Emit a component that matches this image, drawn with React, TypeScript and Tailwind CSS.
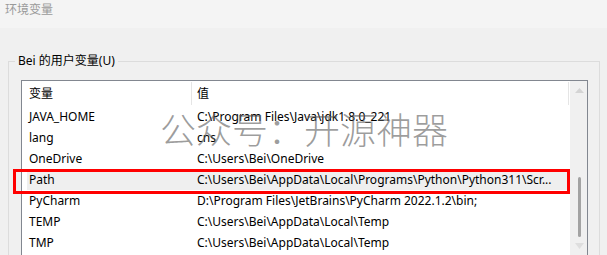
const rows = [
  { name: "JAVA_HOME", value: String.raw`C:\Program Files\Java\jdk1.8.0_221` },
  { name: "lang", value: "cns" },
  { name: "OneDrive", value: String.raw`C:\Users\Bei\OneDrive` },
  { name: "Path", value: String.raw`C:\Users\Bei\AppData\Local\Programs\Python\Python311\Scr...`, selected: true },
  { name: "PyCharm", value: String.raw`D:\Program Files\JetBrains\PyCharm 2022.1.2\bin;` },
  { name: "TEMP", value: String.raw`C:\Users\Bei\AppData\Local\Temp` },
  { name: "TMP", value: String.raw`C:\Users\Bei\AppData\Local\Temp` },
];

function ScrollBar() {
  return (
    <div className="w-[17px] bg-[#f0f0f0] flex flex-col items-center pt-[7px]">
      <svg width="9" height="5" viewBox="0 0 9 5" className="ml-px">
        <path d="M0 5 L4.5 0 L9 5 Z" fill="#d4d4d4" />
      </svg>
      <div className="mt-[84px] h-[60px] w-[3px] rounded-full bg-[#a3a3a3] ml-px" />
      <svg width="9" height="6" viewBox="0 0 9 6" className="mt-[6px] ml-px">
        <path d="M0 0 L9 0 L4.5 6 Z" fill="#dedede" />
      </svg>
    </div>
  );
}

export default function App() {
  return (
    <div className="relative w-[607px] h-[255px] overflow-hidden bg-[#f0f0f0] text-[12px] text-black font-['Noto_Sans','Noto_Sans_CJK_SC',sans-serif]">
      <div className="h-[28px] bg-[#f4f4f4] pl-[5px] pt-[3px] leading-[14px] text-[#9a9a9a]">环境变量</div>

      <fieldset className="ml-[8px] mt-[25px] w-[592px] border border-[#dcdcdc] p-0">
        <legend className="ml-[6px] px-[3px] leading-[16px]">Bei 的用户变量(U)</legend>
        <div className="pl-[12px] mt-[11px] pb-[10px]">
          <div className="flex w-[567px] h-[200px] border border-[#828790] bg-white">
            <div className="w-[548px]">
              {/* header */}
              <div className="flex h-[25px] items-center">
                <div className="w-[169px] pl-[7px]">变量</div>
                <div className="w-px h-[23px] self-start mt-px bg-[#e5e5e5]" />
                <div className="flex-1 pl-[5px]">值</div>
                <div className="w-px h-[23px] self-start mt-px bg-[#e5e5e5]" />
                <div className="w-px" />
              </div>
              {rows.map((r) => (
                <div
                  key={r.name}
                  className={`flex h-[21px] items-center ml-[5px] whitespace-nowrap overflow-hidden ${r.selected ? "bg-[#efefef]" : ""}`}
                >
                  <div className="w-[164px] pl-[2px]">{r.name}</div>
                  <div className="pl-[6px]">{r.value}</div>
                </div>
              ))}
            </div>
            <ScrollBar />
          </div>
        </div>
      </fieldset>

      {/* red annotation box */}
      <div className="absolute left-[13px] top-[169px] w-[557px] h-[25px] border-[3px] border-[#ff0000] pointer-events-none" />

      {/* watermark */}
      <div className="absolute left-[160px] top-[110px] text-[36px] leading-none font-light text-[#5a5a5a]/60 whitespace-nowrap pointer-events-none font-['Noto_Sans_CJK_SC',sans-serif]">
        公众号：开源神器
      </div>
    </div>
  );
}
